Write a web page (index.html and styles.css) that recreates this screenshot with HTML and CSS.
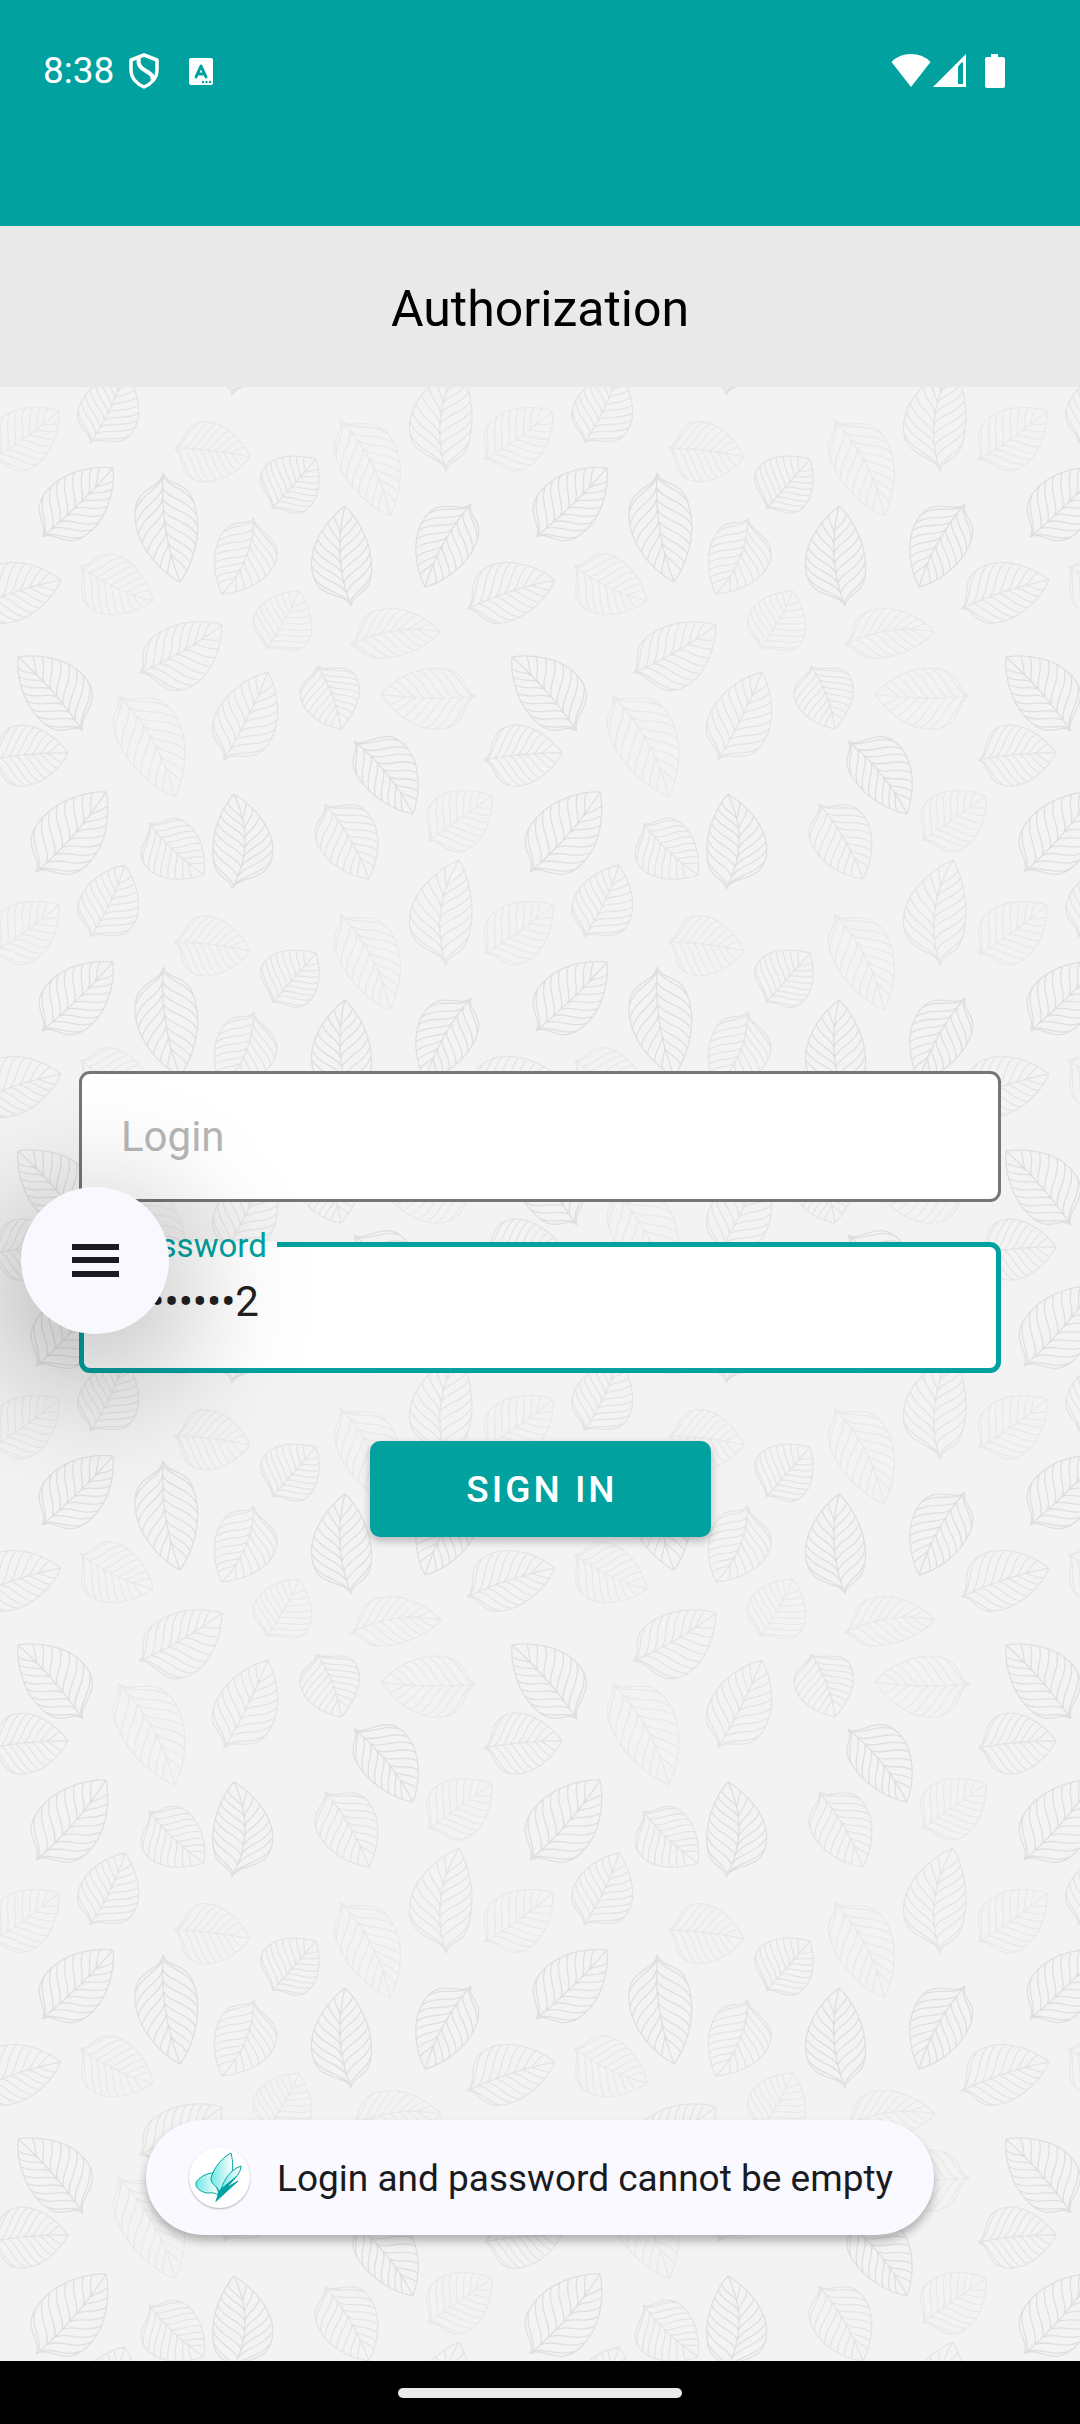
FILE: index.html
```html
<!DOCTYPE html>
<html lang="en">
<head>
<meta charset="utf-8">
<meta name="viewport" content="width=device-width, initial-scale=1">
<title>Authorization</title>
<link rel="stylesheet" href="styles.css">
</head>
<body>
<header class="status-bar">
  <div class="status-left">
    <span class="clock">8:38</span>
    <svg class="icon-shield" viewBox="0 0 30 36" width="30" height="36" fill="none" stroke="#fff" stroke-width="3.500" stroke-linejoin="round">
      <path d="M15 2L28 7V17C28 25 22 31 15 34C8 31 2 25 2 17V7Z"/>
      <path d="M10 5C8 12 12 15 17 18C22 21 25 23 23 27" stroke-width="4"/>
    </svg>
    <svg class="icon-lang" viewBox="0 0 24 27" width="24" height="27">
      <rect width="24" height="27" rx="2" fill="#fff"/>
      <path d="M7 19L12 8L17 19M9 16H15" fill="none" stroke="#00a19f" stroke-width="3" stroke-linecap="round" stroke-linejoin="round"/>
      <g fill="#00a19f"><circle cx="14" cy="24" r="1.200"/><circle cx="17.500" cy="24" r="1.200"/><circle cx="21" cy="24" r="1.200"/></g>
    </svg>
  </div>
  <svg class="icon-system" viewBox="0 0 115 36" width="115" height="36" fill="#fff">
    <path d="M0.500 9Q8 1 20 1T39.500 9L20 34Z"/>
    <path fill-rule="evenodd" d="M42 34L75 1V34ZM67 13.500V31H72V9.500H70.500Z"/>
    <path d="M100 1H107V4H111Q114 4 114 6V33Q114 35 112 35H96Q94 35 94 33V6Q94 4 96 4H100Z"/>
  </svg>
</header>
<div class="title-bar"><h1>Authorization</h1></div>
<main class="content">
  <svg class="leaves" aria-hidden="true">
    <defs>
      <pattern id="leaf-tile" width="494" height="494" patternUnits="userSpaceOnUse" patternTransform="translate(0 -387)"></pattern>
    </defs>
    <rect width="100%" height="100%" fill="url(#leaf-tile)"/>
  </svg>
  <form class="login-form">
    <div class="field">
      <input class="field-input" type="text" placeholder="Login" aria-label="Login">
    </div>
    <div class="field field-focused">
      <label class="field-label" for="password">Password</label>
      <input class="field-input" id="password" type="text" value="••••••••2">
    </div>
    <button class="sign-in" type="button">SIGN IN</button>
  </form>
  <button class="menu-button" type="button" aria-label="Menu">
    <svg viewBox="0 0 48 34" width="48" height="34" fill="#1a1b21"><path d="M1 0H48V6H1ZM1 13H48V19H1ZM1 27H48V33H1Z"/></svg>
  </button>
  <div class="toast" role="status">
    <svg class="toast-logo" viewBox="0 0 61 61" width="61" height="61" stroke="#00a19f" stroke-linejoin="round" stroke-linecap="round">
      <defs><linearGradient id="wing"><stop offset="0" stop-color="#6ee8e4"/><stop offset="1" stop-color="#fff"/></linearGradient></defs>
      <path d="M24 26C17 26 9 31 7 36C6 41 12 45 18 46C22 46 25 45 29 48C31 42 23 38 24 26Z" fill="url(#wing)"/>
      <path d="M30 47C31 39 21 38 22 31C25 20 34 10 42 6C44 14 45 24 41 31C38 36 33 40 30 47Z" fill="url(#wing)"/>
      <path d="M31 45C34 37 38 24 52 19C52 27 44 34 31 45Z" fill="url(#wing)"/>
      <path d="M27 54L31 43L48 29L37 41L49 34L36 46Z" fill="#00a19f"/>
    </svg>
    <span class="toast-text">Login and password cannot be empty</span>
  </div>
</main>
<footer class="nav-bar"><div class="nav-handle"></div></footer>
<script src="leaves.js"></script>
</body>
</html>
```
FILE: styles.css
```css
* { box-sizing: border-box; }

body {
  margin: 0;
  min-height: 100vh;
  display: flex;
  flex-direction: column;
  font-family: Roboto, "Liberation Sans", sans-serif;
  background: #f3f3f3;
}

.status-bar {
  display: flex;
  justify-content: space-between;
  align-items: flex-start;
  height: 226px;
  padding: 53px 74px 0 43px;
  background: #00a19f;
  color: #fff;
}

.status-left { display: flex; align-items: center; height: 36px; }
.clock { font-size: 37px; line-height: 36px; }
.icon-shield { margin-left: 15px; }
.icon-lang { margin-left: 30px; }

.title-bar {
  display: flex;
  align-items: center;
  justify-content: center;
  height: 161px;
  padding-top: 4px;
  background: #e9e9e9;
}

.title-bar h1 { margin: 0; font-size: 50px; font-weight: 400; line-height: 60px; color: #000; }

.content {
  position: relative;
  flex: 1;
  display: flex;
  flex-direction: column;
  justify-content: center;
  padding: 0 79px 140px;
  overflow: hidden;
}

.leaves { position: absolute; inset: 0; width: 100%; height: 100%; }

.login-form {
  position: relative;
  display: flex;
  flex-direction: column;
  align-items: center;
}

.field { position: relative; width: 100%; margin-bottom: 40px; }

.field-input {
  display: block;
  width: 100%;
  height: 131px;
  padding: 0 39px;
  border: 3px solid #767676;
  border-radius: 11px;
  outline: 0;
  background: #fff;
  color: #212121;
  font: 400 42px/50px Roboto, "Liberation Sans", sans-serif;
}

.field-input::placeholder { color: #b6b6b6; opacity: 1; }

.field-focused { margin-bottom: 68px; }
.field-focused .field-input { padding: 0 38px 12px; border: 5px solid #00a19f; }

.field-label {
  position: absolute;
  top: -15px;
  left: 32px;
  padding: 0 10px;
  font-size: 33px;
  line-height: 38px;
  color: #00a19f;
  background: linear-gradient(#fff, #fff) 0 15px / 100% 5px no-repeat;
}

.sign-in {
  min-width: 341px;
  height: 96px;
  padding: 2px 38px 0 42px;
  border: 0;
  border-radius: 10px;
  background: #00a19f;
  box-shadow: 0 4px 8px rgba(0, 0, 0, 0.25);
  color: #fff;
  font: 500 37px/44px Roboto, "Liberation Sans", sans-serif;
  letter-spacing: 3px;
}

.menu-button {
  position: absolute;
  top: 800px;
  left: 21px;
  display: flex;
  align-items: center;
  justify-content: center;
  width: 148px;
  height: 147px;
  padding: 0;
  border: 0;
  border-radius: 50%;
  background: #f9f8fe;
  box-shadow: 0 32px 130px 18px rgba(0, 0, 0, 0.28);
}

.toast {
  position: absolute;
  bottom: 126px;
  left: 50%;
  transform: translateX(-50%);
  display: flex;
  align-items: center;
  gap: 27px;
  height: 115px;
  padding: 0 41px 0 43px;
  border-radius: 58px;
  background: #faf9ff;
  box-shadow: 0 6px 10px rgba(0, 0, 0, 0.28);
  color: #1a1b21;
  font-size: 37px;
  line-height: 44px;
  white-space: nowrap;
}

.toast-text { padding-top: 3px; }
.toast-logo { border-radius: 50%; background: #fff; box-shadow: 0 1px 2px rgba(0, 0, 0, 0.3); }

.nav-bar {
  display: flex;
  align-items: center;
  justify-content: center;
  height: 63px;
  background: #000;
}

.nav-handle { width: 284px; height: 10px; border-radius: 5px; background: #ebebeb; }
```
FILE: leaves.js
```js
// Each leaf: stem x, y, tip x, y, width right of the stem-to-tip line,
// width left of it, midrib bend, line tone.
const TILE = 494;
const LEAVES = [
  [42, 537, 113, 468, 30, 30, 2, 2],
  [163, 473, 180, 582, 35, 27, 6, 2],
  [174, 448, 250, 457, 30, 30, -2, 0],
  [272, 509, 316, 459, 27, 33, 0, 1],
  [340, 420, 390, 516, 22, 37, -8, 0],
  [446, 965, 459, 860, 20, 42, -12, 1],
  [484, 460, 553, 411, 31, 28, 2, 0],
  [90, 937, 125, 865, 34, 26, 3, 1],
  [254, 518, 222, 594, 24, 37, -8, 1],
  [351, 606, 345, 506, 23, 37, -8, 2],
  [471, 504, 425, 587, 34, 24, 5, 2],
  [467, 609, 555, 580, 25, 34, -3, 1],
  [80, 566, 153, 601, 34, 26, 4, 0],
  [266, 649, 299, 591, 33, 27, 2, 0],
  [350, 645, 441, 632, 18, 31, -8, 0],
  [139, 673, 222, 625, 38, 25, 3, 1],
  [83, 731, 18, 657, 37, 25, 3, 2],
  [118, 695, 175, 797, 23, 40, -8, 0],
  [224, 760, 268, 672, 33, 28, 2, 1],
  [317, 666, 341, 729, 27, 33, -4, 1],
  [476, 696, 381, 694, 27, 34, -3, 0],
  [354, 741, 413, 814, 20, 37, -5, 2],
  [428, 841, 492, 796, 30, 30, 0, 0],
  [484, 760, 562, 753, 29, 32, -2, 1],
  [36, 872, 106, 792, 34, 31, 4, 2],
  [149, 823, 204, 875, 34, 26, 3, 1],
  [232, 889, 234, 794, 40, 20, 12, 2],
  [325, 804, 369, 879, 27, 33, -4, 1]
];
const TONES = ["#e9e9e9", "#e4e4e4", "#dfdfdf"];
const LOWER = [[0, 0], [0.16, 0.14], [0.06, 1], [0.42, 1]];
const UPPER = [[0.42, 1], [0.65, 1], [0.88, 0.5], [1, 0]];
const VEINS = 8;

function bezier(p, t, k) {
  const s = 1 - t;
  return s * s * s * p[0][k] + 3 * s * s * t * p[1][k] + 3 * s * t * t * p[2][k] + t * t * t * p[3][k];
}

function leafPath([x1, y1, x2, y2, right, left, bend]) {
  const len = Math.hypot(x2 - x1, y2 - y1);
  const dx = (x2 - x1) / len, dy = (y2 - y1) / len;
  const at = (u, v) => (x1 + dx * u * len - dy * v).toFixed(1) + " " + (y1 + dy * u * len + dx * v).toFixed(1);
  const rib = u => bend * 4 * u * (1 - u);
  let d = "M" + at(0, 0);
  for (let i = 1; i <= 10; i++) d += "L" + at(i / 10, rib(i / 10));
  for (const w of [right, -left]) {
    const edge = (p, i) => at(p[i][0], p[i][1] * w);
    d += "M" + at(0, 0);
    for (const p of [LOWER, UPPER]) d += "C" + edge(p, 1) + " " + edge(p, 2) + " " + edge(p, 3);
    for (let i = 0; i < VEINS; i++) {
      const t = 0.88 + i * 1.04 / VEINS;
      const part = t < 1 ? LOWER : UPPER;
      const eu = bezier(part, t % 1, 0), ev = bezier(part, t % 1, 1) * w;
      const u = 0.03 + 0.8 * i / VEINS;
      const m = rib(u), gap = ev - m, run = eu - u;
      d += "M" + at(u, m) + "C" + at(u + run * 0.4, m + gap * 0.15) + " " +
        at(u + run * 0.45, m + gap * 0.75) + " " + at(eu, ev);
    }
  }
  return d;
}

const tile = document.getElementById("leaf-tile");
for (const leaf of LEAVES) {
  for (let ox = -2; ox <= 1; ox++) {
    for (let oy = -2; oy <= 1; oy++) {
      const path = document.createElementNS("http://www.w3.org/2000/svg", "path");
      path.setAttribute("d", leafPath(leaf));
      path.setAttribute("transform", `translate(${ox * TILE} ${oy * TILE})`);
      path.setAttribute("fill", "none");
      path.setAttribute("stroke", TONES[leaf[7]]);
      path.setAttribute("stroke-width", "1.3");
      tile.appendChild(path);
    }
  }
}
```
